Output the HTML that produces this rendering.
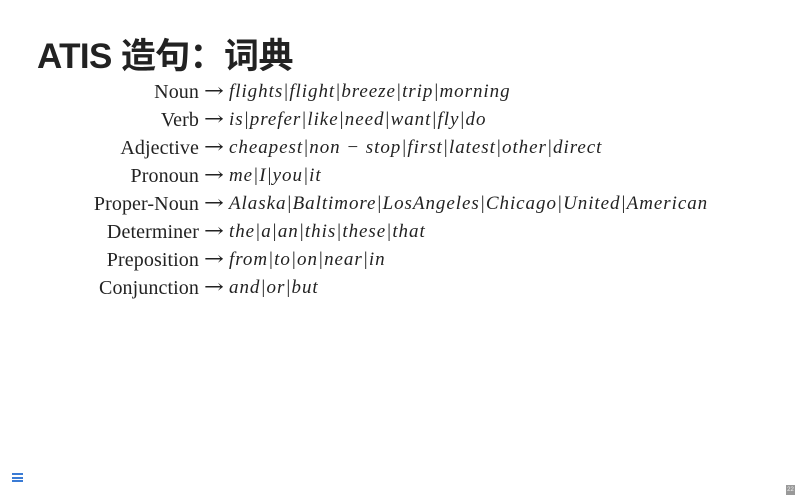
<!DOCTYPE html>
<html><head><meta charset="utf-8"><style>
body{margin:0;width:800px;height:500px;background:#fff;position:relative;overflow:hidden;font-family:"Liberation Serif",serif;color:#222}
h1{position:absolute;left:37px;top:28px;margin:0;font:bold 35px "Liberation Sans","Noto Sans CJK SC",sans-serif;color:#222;letter-spacing:-0.6px}
.r{position:absolute;left:0;height:28px;font-size:19px;line-height:28px;white-space:nowrap}
.l{position:absolute;right:601px;text-align:right;font-size:20px;letter-spacing:0.1px}
.a{position:absolute;left:204px;font-family:"DejaVu Serif",serif;font-size:19px;top:-1px;display:inline-block;transform:scaleX(1.25);transform-origin:left}
.v{position:absolute;left:229px;font-style:italic;letter-spacing:0.95px}
.menu{position:absolute;left:12px;top:473px;width:11px;height:9px;border-top:2px solid #3a7bd5;border-bottom:2px solid #3a7bd5;box-sizing:border-box}
.menu:after{content:"";position:absolute;left:0;right:0;top:1.5px;height:2px;background:#3a7bd5}
.pg{position:absolute;left:786px;top:485px;width:9px;height:10px;background:#999;color:#eee;font:6px sans-serif;text-align:center;line-height:10px}
</style></head><body>
<h1>ATIS 造句：词典</h1>
<div class="r" style="top:78px;width:800px"><span class="l">Noun</span><span class="a">→</span><span class="v">flights|flight|breeze|trip|morning</span></div>
<div class="r" style="top:106px;width:800px"><span class="l">Verb</span><span class="a">→</span><span class="v">is|prefer|like|need|want|fly|do</span></div>
<div class="r" style="top:134px;width:800px"><span class="l">Adjective</span><span class="a">→</span><span class="v">cheapest|non − stop|first|latest|other|direct</span></div>
<div class="r" style="top:162px;width:800px"><span class="l">Pronoun</span><span class="a">→</span><span class="v">me|I|you|it</span></div>
<div class="r" style="top:190px;width:800px"><span class="l">Proper-Noun</span><span class="a">→</span><span class="v">Alaska|Baltimore|LosAngeles|Chicago|United|American</span></div>
<div class="r" style="top:218px;width:800px"><span class="l">Determiner</span><span class="a">→</span><span class="v">the|a|an|this|these|that</span></div>
<div class="r" style="top:246px;width:800px"><span class="l">Preposition</span><span class="a">→</span><span class="v">from|to|on|near|in</span></div>
<div class="r" style="top:274px;width:800px"><span class="l">Conjunction</span><span class="a">→</span><span class="v">and|or|but</span></div>
<div class="menu"></div>
<div class="pg">22</div>
</body></html>
